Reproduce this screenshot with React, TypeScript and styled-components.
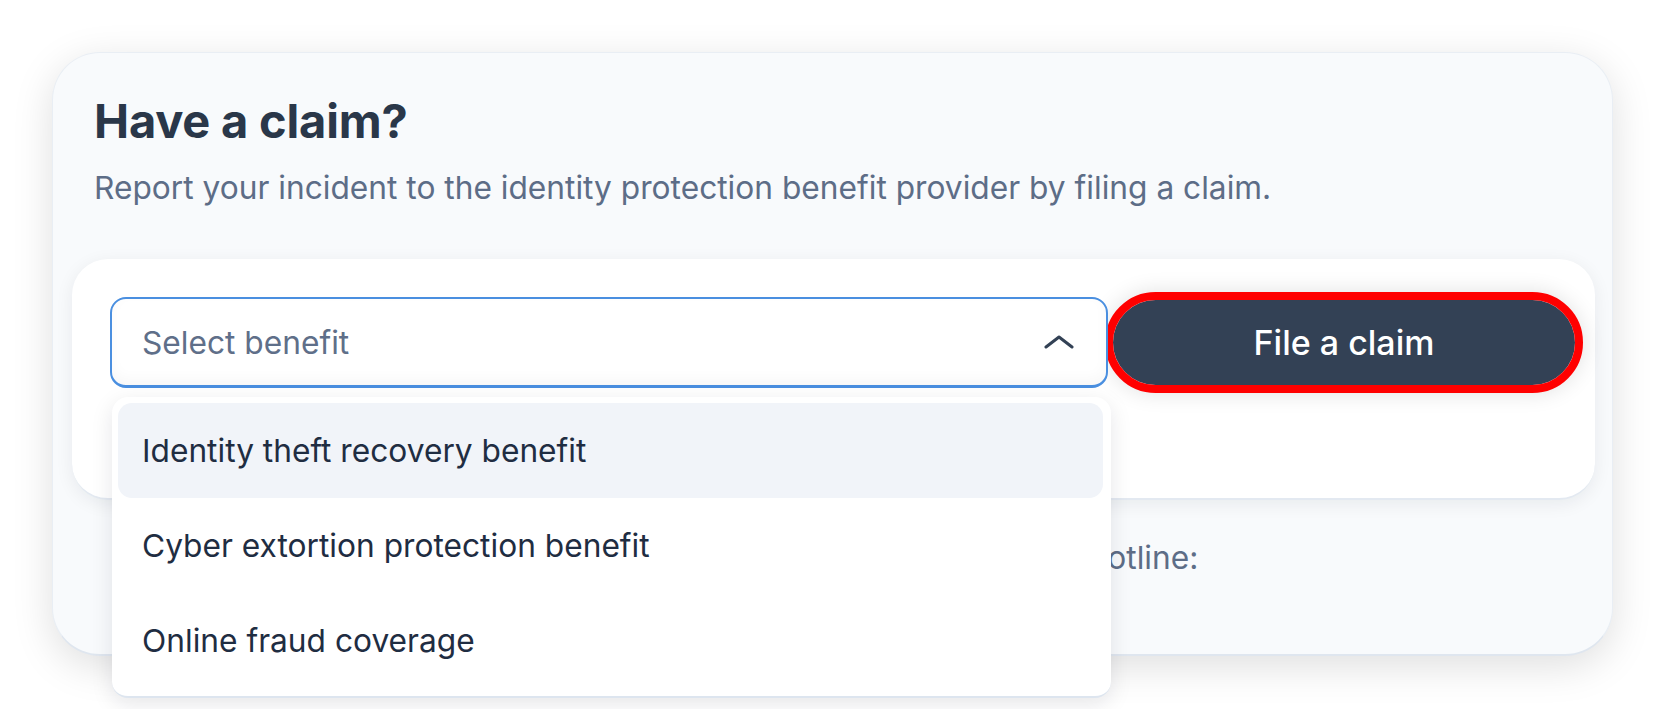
import React from 'react';
import styled, { createGlobalStyle } from 'styled-components';

const GlobalStyle = createGlobalStyle`
  html, body {
    margin: 0;
    padding: 0;
    background: #ffffff;
  }
  body {
    font-family: Inter, "Noto Sans", "Liberation Sans", sans-serif;
    -webkit-font-smoothing: antialiased;
  }
`;

const Page = styled.div`
  width: 1665px;
  height: 709px;
  padding: 52px 52px 0 52px;
  box-sizing: border-box;
  overflow: hidden;
`;

const ClaimCard = styled.section`
  position: relative;
  height: 604px;
  box-sizing: border-box;
  padding: 40px 17px 0 19px;
  background: #f8fafc;
  border: 1px solid #e9eef4;
  border-bottom: 2px solid #dfe6ef;
  border-radius: 48px;
  box-shadow: 0 10px 40px rgba(0, 0, 0, 0.13);
`;

const Title = styled.h1`
  margin: 0 0 19px 22px;
  font-size: 47px;
  line-height: 56px;
  font-weight: 700;
  color: #2a3749;
  letter-spacing: -0.2px;
`;

const Lead = styled.p`
  margin: 0 0 51px 22px;
  font-size: 31.7px;
  line-height: 40px;
  font-weight: 400;
  color: #5d6d87;
`;

const FormPanel = styled.div`
  display: flex;
  align-items: center;
  gap: 5px;
  padding: 38px 22px 110px 38px;
  background: #ffffff;
  border-radius: 36px;
  border-bottom: 2px solid #e3e9f1;
  box-shadow: 0 4px 18px rgba(15, 23, 42, 0.07);
`;

const SelectWrap = styled.div`
  position: relative;
  flex: 0 0 998px;
`;

const SelectBox = styled.div`
  display: flex;
  align-items: center;
  justify-content: space-between;
  height: 91px;
  box-sizing: border-box;
  padding: 0 32px 0 30px;
  background: #ffffff;
  border: 2px solid #4a8fe0;
  border-bottom-width: 3px;
  border-radius: 16px;
  box-shadow: inset 0 -6px 14px rgba(15, 23, 42, 0.03);
`;

const Placeholder = styled.span`
  font-size: 31.7px;
  color: #5f6f89;
`;

const Menu = styled.ul`
  position: absolute;
  top: 100px;
  left: 2px;
  width: 999px;
  margin: 0;
  padding: 6px 8px 8px 6px;
  box-sizing: border-box;
  list-style: none;
  background: #ffffff;
  border-radius: 16px;
  border-bottom: 2px solid #dde5ef;
  box-shadow: 0 6px 22px rgba(15, 23, 42, 0.1);
  z-index: 5;
`;

const Option = styled.li<{ active?: boolean }>`
  display: flex;
  align-items: center;
  height: 95px;
  padding-left: 24px;
  border-radius: 14px;
  background: ${p => (p.active ? '#f1f4f9' : 'transparent')};
  font-size: 31.7px;
  color: #1f2d42;
`;

const ClaimButton = styled.button`
  flex: 0 0 462px;
  height: 85px;
  border: none;
  border-radius: 999px;
  background: #334155;
  color: #ffffff;
  font-family: inherit;
  font-size: 34px;
  font-weight: 500;
  outline: 8px solid #ff0000;
  box-shadow: 0 0 22px 8px rgba(0, 0, 0, 0.12);
  cursor: pointer;
`;

const Hotline = styled.p`
  margin: 38px 0 0 49px;
  font-size: 31.7px;
  line-height: 40px;
  color: #5d6d87;
  white-space: nowrap;
`;

const Chevron = () => (
  <svg width="30" height="14" viewBox="0 0 30 14" fill="none">
    <polyline
      points="2,12 15,2 28,12"
      stroke="#334155"
      strokeWidth="3"
      strokeLinecap="round"
      strokeLinejoin="round"
    />
  </svg>
);

const options = [
  'Identity theft recovery benefit',
  'Cyber extortion protection benefit',
  'Online fraud coverage',
];

export default function App() {
  return (
    <>
      <GlobalStyle />
      <Page>
        <ClaimCard>
          <Title>Have a claim?</Title>
          <Lead>Report your incident to the identity protection benefit provider by filing a claim.</Lead>
          <FormPanel>
            <SelectWrap>
              <SelectBox>
                <Placeholder>Select benefit</Placeholder>
                <Chevron />
              </SelectBox>
              <Menu>
                {options.map((o, i) => (
                  <Option key={o} active={i === 0}>{o}</Option>
                ))}
              </Menu>
            </SelectWrap>
            <ClaimButton>File a claim</ClaimButton>
          </FormPanel>
          <Hotline>If you need help filing a claim, call the identity protection benefit hotline:</Hotline>
        </ClaimCard>
      </Page>
    </>
  );
}
